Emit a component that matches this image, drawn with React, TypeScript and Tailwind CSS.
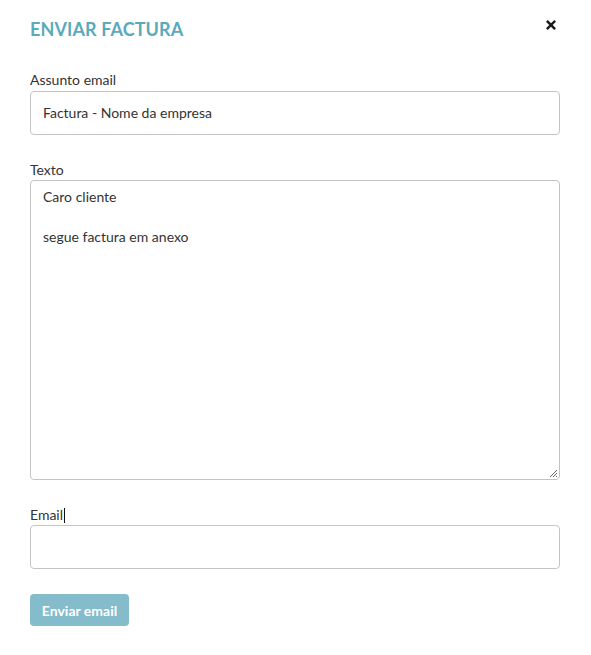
import React from "react";

export default function App() {
  return (
    <div className="w-[591px] h-[655px] bg-white text-[#333] text-[14px]" style={{ fontFamily: "Lato, 'Open Sans', sans-serif" }}>
      <div className="pl-[30px] w-[560px] pt-[17px]">
        <div className="flex items-start justify-between">
          <h1 className="text-[18px] leading-[24px] font-bold text-[#5aaabb] tracking-[0.1px]">ENVIAR FACTURA</h1>
          <button className="mt-[2px] mr-[3px] w-[12px] h-[12px] flex items-center justify-center">
            <svg width="10" height="10" viewBox="0 0 10 10">
              <path d="M1.7 1.7 L8.3 8.3 M8.3 1.7 L1.7 8.3" stroke="#1a1a1a" strokeWidth="2.4" strokeLinecap="square" />
            </svg>
          </button>
        </div>

        <div className="mt-[29px]">
          <label className="block leading-[20px] mb-[1px]">Assunto email</label>
          <div className="h-[44px] border border-[#c4c4c4] rounded-[4px] px-[12px] flex items-center leading-[20px]">
            Factura - Nome da empresa
          </div>
        </div>

        <div className="mt-[25px]">
          <label className="block leading-[20px] mb-0">Texto</label>
          <div className="relative h-[300px] border border-[#c4c4c4] rounded-[4px] px-[12px] pt-[6px] leading-[20px]">
            <div>Caro cliente</div>
            <div>&nbsp;</div>
            <div>segue factura em anexo</div>
            <svg className="absolute right-[1px] bottom-[1px]" width="9" height="9" viewBox="0 0 9 9">
              <path d="M8 1 L1 8 M8 4 L4 8 M8 7 L7 8" stroke="#666" strokeWidth="1" />
            </svg>
          </div>
        </div>

        <div className="mt-[25px]">
          <label className="flex items-center h-[20px] leading-[20px] mb-0">
            Email<span className="inline-block w-[1px] h-[15px] bg-[#111] ml-[1px]"></span>
          </label>
          <div className="h-[44px] border border-[#c4c4c4] rounded-[4px]"></div>
        </div>

        <button className="mt-[25px] h-[32px] w-[99px] rounded-[4px] bg-[#84bccb] text-white font-bold text-[14px] flex items-center justify-center">
          Enviar email
        </button>
      </div>
    </div>
  );
}
